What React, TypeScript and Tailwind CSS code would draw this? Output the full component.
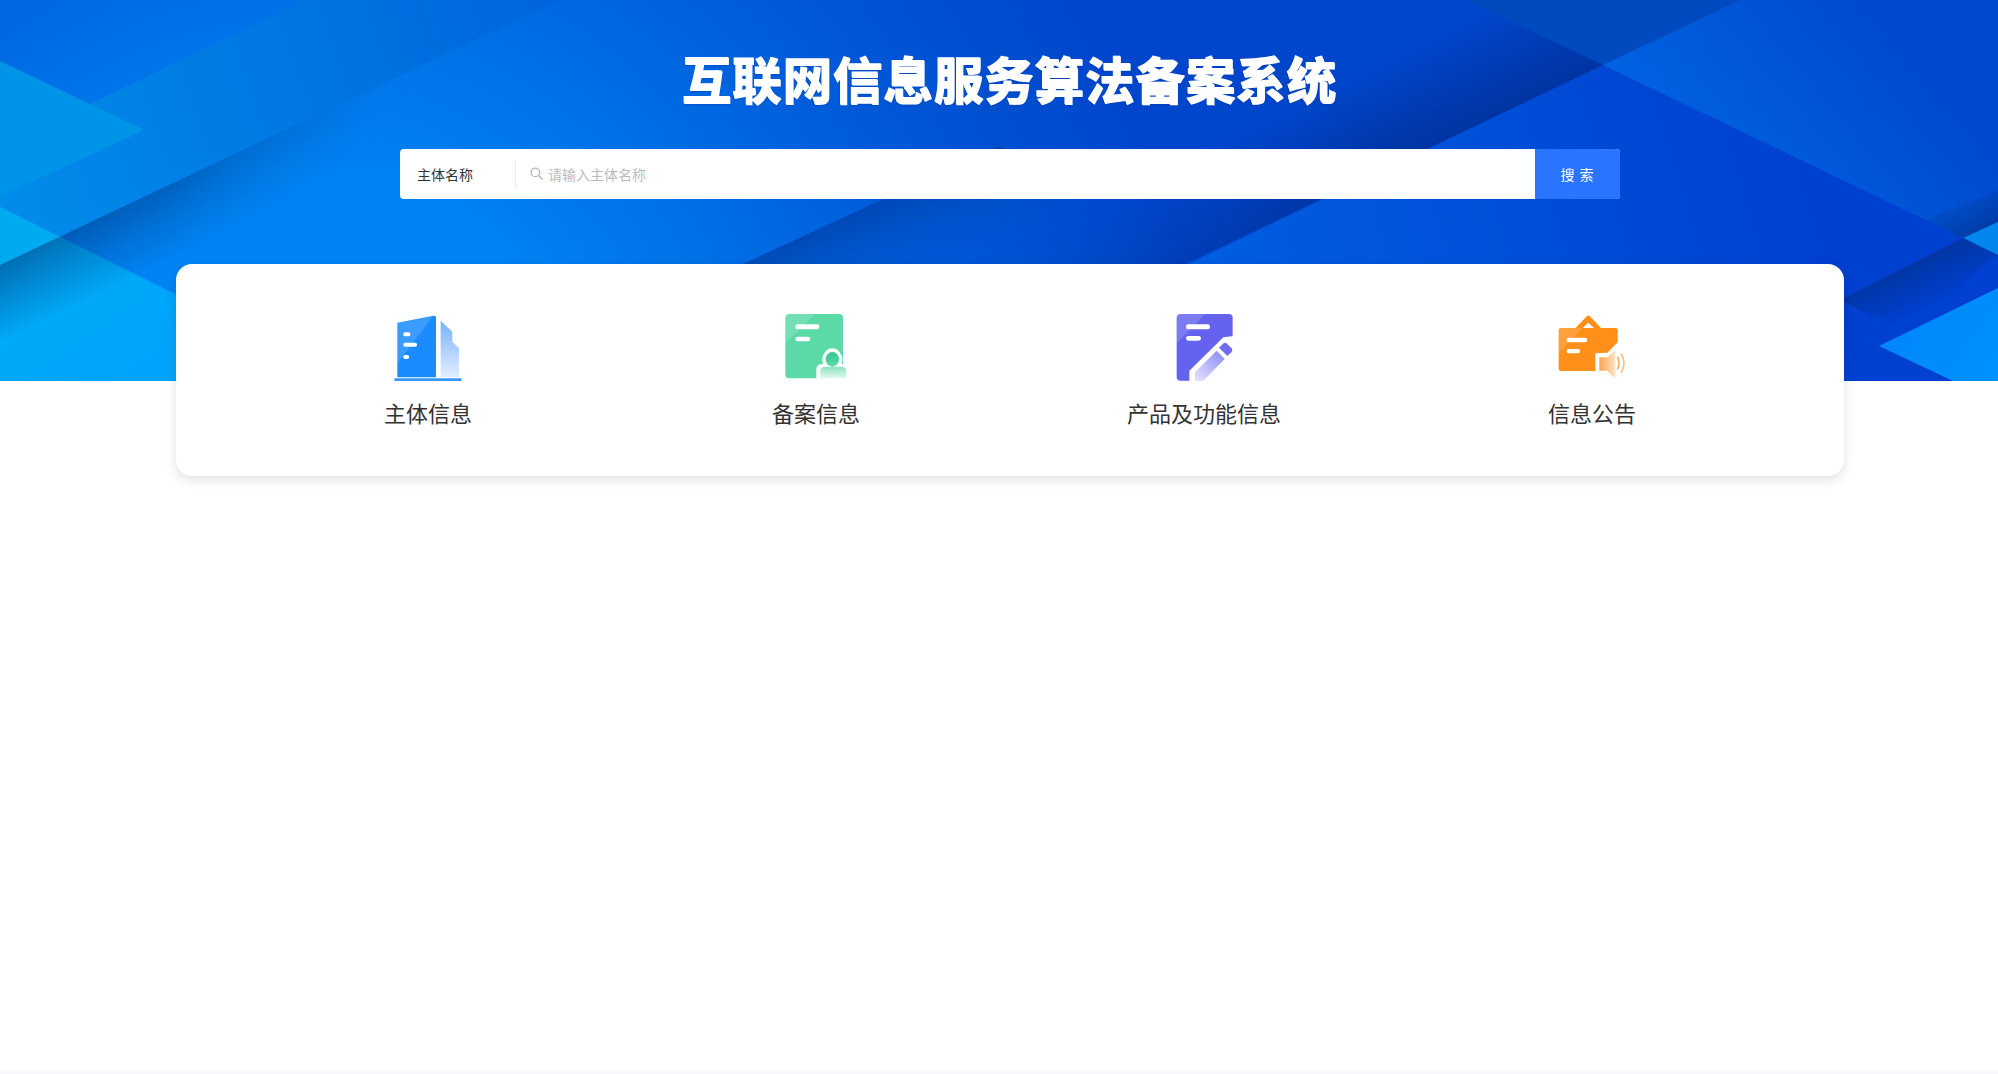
const cjk = "font-['Noto_Sans_CJK_SC','Noto_Sans',sans-serif]";

function HeaderArt() {
  return (
    <svg className="absolute inset-0 w-full h-full" viewBox="0 0 1998 381" preserveAspectRatio="none">
      <defs>
        <radialGradient id="base" gradientUnits="userSpaceOnUse" cx="300" cy="450" r="900">
          <stop offset="0.3" stopColor="#0084f4" />
          <stop offset="0.5" stopColor="#0070e6" />
          <stop offset="0.7" stopColor="#005cda" />
          <stop offset="0.85" stopColor="#0050d0" />
          <stop offset="1" stopColor="#0046cc" />
        </radialGradient>
        <linearGradient id="band" gradientUnits="userSpaceOnUse" x1="0" y1="200" x2="560" y2="0">
          <stop offset="0" stopColor="#008cea" />
          <stop offset="1" stopColor="#0064dc" />
        </linearGradient>
        <linearGradient id="bright" gradientUnits="userSpaceOnUse" x1="0" y1="220" x2="120" y2="381">
          <stop offset="0" stopColor="#00b0f4" />
          <stop offset="1" stopColor="#00a4fc" />
        </linearGradient>
        <linearGradient id="shadowLeft" gradientUnits="userSpaceOnUse" x1="60" y1="237" x2="90" y2="300">
          <stop offset="0" stopColor="#003a80" stopOpacity="0.55" />
          <stop offset="1" stopColor="#003a80" stopOpacity="0" />
        </linearGradient>
        <linearGradient id="fadeAlong" gradientUnits="userSpaceOnUse" x1="0" y1="0" x2="380" y2="0">
          <stop offset="0" stopColor="#fff" />
          <stop offset="0.45" stopColor="#fff" stopOpacity="0.8" />
          <stop offset="1" stopColor="#fff" stopOpacity="0" />
        </linearGradient>
        <mask id="leftMask" maskUnits="userSpaceOnUse" x="0" y="0" width="1998" height="381">
          <rect width="1998" height="381" fill="url(#fadeAlong)" />
        </mask>
        <linearGradient id="lineShadow" gradientUnits="userSpaceOnUse" x1="1434" y1="148" x2="1391" y2="58">
          <stop offset="0" stopColor="#002f96" stopOpacity="0.8" />
          <stop offset="1" stopColor="#002f96" stopOpacity="0" />
        </linearGradient>
        <linearGradient id="fadeLine" gradientUnits="userSpaceOnUse" x1="1040" y1="0" x2="1340" y2="0">
          <stop offset="0" stopColor="#fff" stopOpacity="0" />
          <stop offset="1" stopColor="#fff" />
        </linearGradient>
        <mask id="lineMask" maskUnits="userSpaceOnUse" x="0" y="0" width="1998" height="381">
          <rect width="1998" height="381" fill="url(#fadeLine)" />
        </mask>
        <linearGradient id="midEdge" gradientUnits="userSpaceOnUse" x1="743" y1="264" x2="785" y2="350">
          <stop offset="0" stopColor="#003fa8" stopOpacity="0.75" />
          <stop offset="1" stopColor="#0050c8" stopOpacity="0" />
        </linearGradient>
        <linearGradient id="rightBase" gradientUnits="userSpaceOnUse" x1="1150" y1="350" x2="1800" y2="150">
          <stop offset="0" stopColor="#0062e2" />
          <stop offset="1" stopColor="#0040d0" />
        </linearGradient>
        <linearGradient id="topRight" gradientUnits="userSpaceOnUse" x1="1680" y1="170" x2="1880" y2="0">
          <stop offset="0" stopColor="#0064e2" />
          <stop offset="1" stopColor="#0048cc" />
        </linearGradient>
        <linearGradient id="cornerShadow" gradientUnits="userSpaceOnUse" x1="1963" y1="238" x2="1945" y2="200">
          <stop offset="0" stopColor="#00308c" stopOpacity="0.6" />
          <stop offset="1" stopColor="#00308c" stopOpacity="0" />
        </linearGradient>
        <linearGradient id="cornerShadow2" gradientUnits="userSpaceOnUse" x1="1905" y1="266" x2="1925" y2="310">
          <stop offset="0" stopColor="#00308c" stopOpacity="0.65" />
          <stop offset="1" stopColor="#00308c" stopOpacity="0" />
        </linearGradient>
        <linearGradient id="rightTip" gradientUnits="userSpaceOnUse" x1="1880" y1="300" x2="1998" y2="381">
          <stop offset="0" stopColor="#0084f8" />
          <stop offset="1" stopColor="#0092fe" />
        </linearGradient>
      </defs>

      <rect width="1998" height="381" fill="url(#base)" />
      <polygon points="0,147 306,0 560,0 0,265" fill="url(#band)" />
      <polygon points="0,61 144,130 0,197" fill="#0094e8" />
      <polygon points="0,207 350,381 0,381" fill="url(#bright)" />
      <polygon points="0,207 59,237 0,265" fill="#00aaf0" />
      <g mask="url(#leftMask)">
        <polygon points="0,265 560,0 560,160 100,381 0,381" fill="url(#shadowLeft)" />
      </g>

      <polygon points="743,264 1000,145 1100,200 1000,381 660,381" fill="url(#midEdge)" />
      <polygon points="1188,264 1740,0 1998,0 1998,381 1010,381" fill="url(#rightBase)" />
      <g mask="url(#lineMask)">
        <polygon points="1000,352 1603,65 1560,-25 957,262" fill="url(#lineShadow)" />
      </g>
      <polygon points="1465,0 1740,0 1603,65" fill="#0049bf" />
      <polygon points="1603,65 1740,0 1998,0 1998,222 1963,238" fill="url(#topRight)" />
      <polygon points="1925,220 1963,238 1998,222 1998,190" fill="url(#cornerShadow)" />
      <polygon points="1963,238 1998,222 1998,255" fill="#0086ec" />
      <polygon points="1840,300 1963,238 1998,255 1900,330" fill="url(#cornerShadow2)" />
      <polygon points="1879,346 1998,288 1998,381 1953,381" fill="url(#rightTip)" />
    </svg>
  );
}

function BuildingIcon() {
  return (
    <svg width="120" height="90" viewBox="-6 0 360 270">
      <defs>
        <linearGradient id="bSide" x1="0" y1="0" x2="0" y2="1">
          <stop offset="0" stopColor="#78b2ff" />
          <stop offset="1" stopColor="#e2eeff" />
        </linearGradient>
      </defs>
      <path d="M82 68 L190 47 Q198 46 198 54 L198 232 L82 232 Z" fill="#1a8cff" />
      <path d="M82 68 L190 47 L82 190 Z" fill="#fff" opacity="0.14" />
      <rect x="100" y="97" width="21" height="12" rx="5" fill="#fff" />
      <rect x="100" y="128" width="41" height="12" rx="5" fill="#fff" />
      <rect x="100" y="165" width="17" height="12" rx="5" fill="#fff" />
      <path d="M212 62 L247 95 L247 125 L267 145 L267 232 L212 232 Z" fill="url(#bSide)" />
      <rect x="73" y="235" width="202" height="8" rx="2" fill="#3b96ff" />
    </svg>
  );
}

function RecordIcon() {
  return (
    <svg width="120" height="90" viewBox="-13 0 360 270">
      <defs>
        <linearGradient id="gHead" x1="0" y1="0" x2="0" y2="1">
          <stop offset="0" stopColor="#30c48e" />
          <stop offset="1" stopColor="#62dcaa" />
        </linearGradient>
        <linearGradient id="gBody" x1="0" y1="0" x2="0" y2="1">
          <stop offset="0" stopColor="#8be2c0" />
          <stop offset="1" stopColor="#e4f9f0" />
        </linearGradient>
      </defs>
      <rect x="75" y="42" width="173" height="193" rx="12" fill="#5bdaa8" />
      <path d="M87 42 L165 42 L75 130 L75 54 Q75 42 87 42 Z" fill="#fff" opacity="0.14" />
      <rect x="105" y="73" width="72" height="15" rx="7" fill="#fff" />
      <rect x="105" y="110" width="45" height="14" rx="7" fill="#fff" />
      <ellipse cx="216" cy="180" rx="30" ry="35" fill="#fff" />
      <rect x="168" y="192" width="100" height="60" rx="16" fill="#fff" />
      <ellipse cx="216" cy="178" rx="20" ry="22" fill="url(#gHead)" />
      <path d="M180 235 L180 215 Q180 200 195 200 L243 200 Q258 200 258 215 L258 235 Z" fill="url(#gBody)" />
    </svg>
  );
}

function ProductIcon() {
  return (
    <svg width="120" height="90" viewBox="-18 0 360 270">
      <defs>
        <linearGradient id="pBody" x1="1" y1="0" x2="0" y2="1">
          <stop offset="0" stopColor="#8a87f6" />
          <stop offset="1" stopColor="#e4e4ff" />
        </linearGradient>
      </defs>
      <rect x="80" y="42" width="168" height="200" rx="12" fill="#6562ef" />
      <path d="M92 42 L165 42 L80 130 L80 54 Q80 42 92 42 Z" fill="#fff" opacity="0.16" />
      <path d="M252 108 L220 112 L118 212 L118 246 L252 246 Z" fill="#fff" />
      <rect x="108" y="73" width="72" height="15" rx="7" fill="#fff" />
      <rect x="108" y="108" width="45" height="14" rx="7" fill="#fff" />
      <path d="M219 131 Q225 126 231 131 L245 145 Q249 151 245 156 L232 168 L207 143 Z" fill="#6f6cf2" />
      <path d="M200 152 L224 177 L160 242 L135 242 L135 217 Z" fill="url(#pBody)" />
    </svg>
  );
}

function NoticeIcon() {
  return (
    <svg width="120" height="90" viewBox="-22 0 360 270">
      <defs>
        <linearGradient id="oSpk" x1="0" y1="0" x2="1" y2="0">
          <stop offset="0" stopColor="#ffa452" />
          <stop offset="1" stopColor="#ffe2c4" />
        </linearGradient>
      </defs>
      <path d="M108 85 L141 50 Q147 43 153 50 L186 85 Z" fill="#fe8f18" />
      <path d="M130 84 L147 68 L164 84 Z" fill="#fff" />
      <rect x="58" y="84" width="177" height="129" rx="7" fill="#fe8f18" />
      <path d="M65 84 L128 84 L58 160 L58 91 Q58 84 65 84 Z" fill="#fff" opacity="0.16" />
      <rect x="82" y="113" width="62" height="14" rx="6" fill="#fff" />
      <rect x="82" y="147" width="40" height="13" rx="6" fill="#fff" />
      <path d="M168 160 L204 158 L238 124 L245 240 L168 240 Z" fill="#fff" />
      <path d="M180 172 L204 172 L228 150 L228 236 L204 212 L180 212 Z" fill="url(#oSpk)" />
      <path d="M235 172 Q243 190 235 207" fill="none" stroke="#ffa95c" strokeWidth="5" strokeLinecap="round" />
      <path d="M246 162 Q262 190 246 217" fill="none" stroke="#ffbc80" strokeWidth="5" strokeLinecap="round" />
    </svg>
  );
}

const items = [
  { label: "主体信息", icon: <BuildingIcon /> },
  { label: "备案信息", icon: <RecordIcon /> },
  { label: "产品及功能信息", icon: <ProductIcon /> },
  { label: "信息公告", icon: <NoticeIcon /> },
];

export default function App() {
  return (
    <div className={`flex flex-col h-[1074px] bg-white overflow-hidden ${cjk}`}>
      <header className="relative h-[381px] shrink-0 overflow-hidden">
        <HeaderArt />
        <div className="relative ml-[400px] w-[1220px] flex flex-col items-center">
          <h1 className="mt-[47px] h-[60px] text-[50px] leading-[60px] font-black text-white tracking-[0.4px] -translate-x-[1px] [text-shadow:0.5px_0.5px_0_#fff,0_2px_2px_rgba(0,40,140,0.3)]">
            互联网信息服务算法备案系统
          </h1>
          <div className="mt-[42px] flex h-[50px] w-full rounded-[4px] items-stretch bg-white overflow-hidden">
            <div className="w-[115px] shrink-0 flex items-center pl-[17px] text-[14px] text-[#333]">
              主体名称
            </div>
            <div className="w-px bg-[#eeeeee] my-[11px]" />
            <div className="flex-1 flex items-center pl-[14px] gap-[5px] text-[14px] text-[#bbbbbb]">
              <svg width="13" height="13" viewBox="0 0 14 14" fill="none" stroke="#b4b4b4" strokeWidth="1.4" className="-mt-[1px]">
                <circle cx="5.8" cy="5.8" r="4.6" />
                <path d="M9.2 9.2 L13 13" strokeLinecap="round" />
              </svg>
              <span>请输入主体名称</span>
            </div>
            <button className="w-[85px] shrink-0 bg-[#2b74ff] text-white text-[14px] tracking-[1px]">搜 索</button>
          </div>
        </div>
      </header>

      <main className="relative z-10 -mt-[117px] ml-[176px] w-[1668px] h-[212px] shrink-0 rounded-2xl bg-white shadow-[0_4px_12px_rgba(0,0,0,0.12)] grid grid-cols-4 px-[58px] pt-[36px]">
        {items.map((item) => (
          <div key={item.label} className="flex flex-col items-center">
            {item.icon}
            <div className="mt-[6px] text-[22px] leading-[32px] text-[#333]">{item.label}</div>
          </div>
        ))}
      </main>

      <footer className="mt-auto h-[3px] bg-[#f7f7fc]" />
    </div>
  );
}
